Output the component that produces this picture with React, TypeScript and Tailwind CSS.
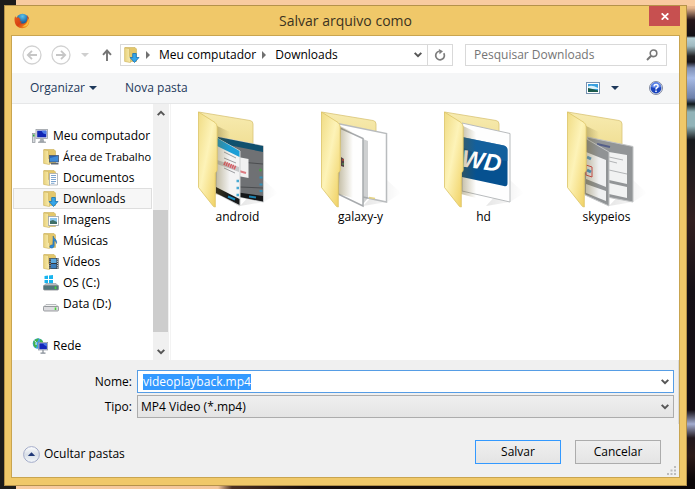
import { useEffect, useRef } from "react";
import type { ReactNode } from "react";

function FirefoxIcon() {
  return (
    <svg width="16" height="16" viewBox="0 0 16 16" aria-hidden="true">
      <defs>
        <radialGradient id="ff-globe" cx="0.5" cy="0.2" r="0.8">
          <stop offset="0" stopColor="#5fc4ea" />
          <stop offset="0.6" stopColor="#1c68a8" />
          <stop offset="1" stopColor="#123a78" />
        </radialGradient>
        <linearGradient id="ff-fox" x1="0" y1="0" x2="1" y2="1">
          <stop offset="0" stopColor="#e8641b" />
          <stop offset="0.5" stopColor="#d63f14" />
          <stop offset="1" stopColor="#f9b42a" />
        </linearGradient>
      </defs>
      <circle cx="8.500" cy="7" r="6.200" fill="url(#ff-globe)" />
      <path d="M1.200 3 C.6 4.500 .4 6 .6 8 C1 12.400 4.200 15.200 8.200 15.200 C12.400 15.200 15.400 12 15.300 8 C15.300 5.500 14.500 3.500 13 2.200 C14 5 13.200 8.800 11 10 C9 11 6.800 10.600 6.200 9.600 C7.200 9.700 8 9.400 8.400 8.800 C7.200 8.700 6.200 8.200 5.600 7.400 C6 6.800 6.600 6.500 6.700 5.900 C5.500 5.600 4.900 5 4.700 4.200 C3.900 4 3 4.300 2.400 4.800 C1.800 4.200 1.400 3.700 1.200 3Z" fill="url(#ff-fox)" />
      <path d="M13.800 5 C14.400 9 11.500 12.800 8 13.200 C11.500 14.800 15 12 14.900 8 C14.900 6.800 14.500 5.800 13.800 5Z" fill="#fbc03a" />
    </svg>
  );
}

function SmallFolder({ children }: { children?: ReactNode }) {
  return (
    <svg width="16" height="16" viewBox="0 0 16 16" className="shrink-0" aria-hidden="true">
      <defs>
        <linearGradient id="sf-front" x1="0" y1="0" x2="1" y2="0">
          <stop offset="0" stopColor="#e9d27d" />
          <stop offset="1" stopColor="#f8ecb0" />
        </linearGradient>
      </defs>
      <path d="M1 .5 H11 L12.500 2 V14.500 H5Z" fill="#e3c76b" stroke="#cbb05a" strokeWidth=".6" />
      <path d="M.6 .8 L5.500 1.600 V9.500 L6.500 10.200 V15.600 L.6 14.400Z" fill="url(#sf-front)" stroke="#cdb25c" strokeWidth=".6" />
      {children}
    </svg>
  );
}

const DownArrowMark = () => (
  <path d="M8.700 6.500 H12.300 V10.500 H15 L10.500 15.500 L6 10.500 H8.700Z" fill="#35a5e8" stroke="#1571b4" strokeWidth=".8" />
);
const DesktopMark = () => (
  <g>
    <rect x="6.500" y="6.500" width="9" height="6.500" fill="#2a5fae" stroke="#4a5a70" strokeWidth=".8" />
    <path d="M7 9 L15 7 V12.500 H7Z" fill="#3f8ad6" />
    <path d="M8 14 H15.500 V15.500 H8Z" fill="#5e6670" />
  </g>
);
const DocumentMark = () => (
  <g>
    <path d="M6.500 3.500 H14.500 V15 H6.500Z" fill="#fff" stroke="#a3a9b0" strokeWidth=".8" />
    <path d="M8 5.500 H13 M8 7.500 H13 M8 9.500 H13 M8 11.500 H13 M8 13.300 H11.500" stroke="#6f9ccb" strokeWidth=".9" />
  </g>
);
const ImageMark = () => (
  <g>
    <rect x="5.500" y="4.500" width="10" height="9" fill="#fff" stroke="#9ba3aa" strokeWidth=".8" />
    <rect x="7" y="6" width="7" height="6" fill="#8cc7ee" />
    <path d="M7 9 L10 8 L14 10 V12 H7Z" fill="#3f6f68" />
  </g>
);
const MusicMark = () => (
  <path d="M10.200 3 C10.500 6 14.500 6.200 13.500 10.500 C13.300 8.500 12 7.800 11.200 7.600 V13 C11 15.200 7 16 6.800 13.800 C6.700 12.300 8.600 11.700 9.800 12Z" fill="#2d8bd8" stroke="#1a5d9e" strokeWidth=".5" />
);
const VideoMark = () => (
  <g>
    <rect x="6" y="4" width="9.500" height="11" fill="#35393d" />
    <rect x="8" y="4.600" width="5.500" height="4.400" fill="#5eaae0" />
    <rect x="8" y="10" width="5.500" height="4.400" fill="#3d7dba" />
    <path d="M7 4.500 V15 M14.500 4.500 V15" stroke="#d9dde0" strokeWidth=".9" strokeDasharray="1.200 1" />
  </g>
);

function ComputerIcon() {
  return (
    <svg width="16" height="16" viewBox="0 0 16 16" className="shrink-0" aria-hidden="true">
      <rect x="0.500" y="5.500" width="2.500" height="9" fill="#d5d9dc" stroke="#8c9297" strokeWidth=".7" />
      <rect x="1" y="6.500" width="1.500" height="2" fill="#2fae39" />
      <rect x="4" y="1.500" width="11.500" height="9" fill="#e4e6e8" stroke="#999fa5" strokeWidth=".8" />
      <rect x="5.200" y="2.700" width="9.100" height="6.600" fill="#1226b4" />
      <path d="M9.500 2.700 H14.300 V6.200 Q11 6.200 9.500 2.700Z" fill="#4d7be8" />
      <path d="M8.300 11 H11.500 L12.500 14.200 H7.200Z" fill="#a7adb2" />
      <path d="M6 14.200 H14" stroke="#8c9297" />
    </svg>
  );
}

function DriveIcon({ system }: { system?: boolean }) {
  return (
    <svg width="16" height="16" viewBox="0 0 16 16" className="shrink-0" aria-hidden="true">
      {system && <path d="M1.500 1 L5 .6 V4 H1.500Z M6 .5 L10 0 V4 H6Z M1.500 5 H5 V8.400 L1.500 8Z M6 5 H10 V9 L6 8.500Z" fill="#18b4ee" />}
      <path d="M3 8.500 H13 L15.500 11 H.5Z" fill={system ? "#b8bec3" : "#f2f2f2"} stroke="#9fa4a8" strokeWidth=".7" />
      <rect x=".5" y="10.500" width="15" height="4.500" rx="1" fill={system ? "#53777c" : "#dcdcdf"} stroke="#85898d" strokeWidth=".8" />
      <path d="M12.500 11.500 V14" stroke="#46d33b" strokeWidth="1.600" />
    </svg>
  );
}

function NetworkIcon() {
  return (
    <svg width="16" height="16" viewBox="0 0 16 16" className="shrink-0" aria-hidden="true">
      <circle cx="6" cy="5.500" r="5.300" fill="#3b9fe0" />
      <path d="M1.500 3 Q4 0 7 .6 L5.500 3.500 L3 5 L5 7.500 L3.800 10 Q.5 8 1.500 3Z M8 1 Q11.500 2.500 11 5 L8 4.500Z" fill="#43b548" />
      <path d="M2.500 2.500 Q5 4 4 7" stroke="#d7f2fa" fill="none" strokeWidth="1" />
      <rect x="6.500" y="4.500" width="9.200" height="7.500" fill="#dfe3ea" stroke="#7f8893" strokeWidth=".6" />
      <rect x="7.300" y="5.300" width="7.600" height="5.900" fill="#1328bb" />
      <path d="M11 5.300 H14.900 V8.500 Q12 8 11 5.300Z" fill="#4c78e4" />
      <path d="M11 12 V15 M8.500 15.200 H13.500" stroke="#858d96" strokeWidth="1.200" />
    </svg>
  );
}

function BigFolder({ id, children }: { id: string; children: ReactNode }) {
  return (
    <svg width="96" height="100" viewBox="0 0 96 100" aria-hidden="true">
      <defs>
        <linearGradient id={`${id}-front`} x1="0" y1="0" x2="1" y2="1">
          <stop offset="0" stopColor="#f0dc85" />
          <stop offset="0.450" stopColor="#fdf3b8" />
          <stop offset="1" stopColor="#efce5c" />
        </linearGradient>
        <linearGradient id={`${id}-back`} x1="0" y1="0" x2="0" y2="1">
          <stop offset="0" stopColor="#f7ebb0" />
          <stop offset="1" stopColor="#e8cf72" />
        </linearGradient>
        <linearGradient id={`${id}-fall`} x1="0" y1="0" x2="1" y2="0">
          <stop offset="0" stopColor="#000" stopOpacity="0.250" />
          <stop offset="1" stopColor="#000" stopOpacity="0" />
        </linearGradient>
        <linearGradient id={`${id}-shade`} x1="0" y1="0" x2="1" y2="0">
          <stop offset="0" stopColor="#6b5a1c" stopOpacity="0.400" />
          <stop offset="1" stopColor="#6b5a1c" stopOpacity="0" />
        </linearGradient>
      </defs>
      <path d="M50 96 L74 70 L88 83 L74 92Z" fill={`url(#${id}-fall)`} opacity="0.400" />
      <path d="M8.500 2 L60 10.500 Q63 11 63 14 V70 L27 80Z" fill={`url(#${id}-back)`} stroke="#d9c476" strokeWidth=".8" />
      {children}
      <path d="M27 16 L40 22 V88 L25 84Z" fill={`url(#${id}-shade)`} />
      <path d="M8.500 2 L25 12.500 Q27 14 27.200 17 V60 Q27 61.500 25.300 63 V97 L23.500 96.500 L8.500 77.500Z" fill={`url(#${id}-front)`} stroke="#dcc467" strokeWidth=".8" />
    </svg>
  );
}

const AndroidPages = () => (
  <g>
    <path d="M28 27 L73.500 36 V92 L45 86Z" fill="#6f7174" stroke="#c7c9ca" strokeWidth="1" />
    <path d="M28 27 L73 36 V42 L28 33Z" fill="#10506e" />
    <path d="M50 52 L73 54 M50 77 L73 78" stroke="#4b4d50" />
    <path d="M48 47 L58.500 49 V68 L48 66Z" fill="#f1f1f1" />
    <path d="M49 61 L56 63" stroke="#dd7b82" strokeWidth="2" />
    <circle cx="70.500" cy="60" r="1.500" fill="#4a9a49" />
    <path d="M69.500 67.500 h3 M69.500 74.500 h3 M69.500 81 h3" stroke="#3190b8" strokeWidth="2" />
    <path d="M45 82 L73 86 V91.500 L45 86Z" fill="#151719" />
    <path d="M59 86.500 L66 87.500" stroke="#1c82b0" strokeWidth="2" />
    <path d="M27 28 L50 41 V96 L26 83Z" fill="#f4f4f4" stroke="#cfd1d2" strokeWidth="1" />
    <path d="M27 28 L49.500 41 V47 L27 36Z" fill="#1c9ed6" />
    <path d="M34 42 L46 48 M34 48 L46 53 M34 58 L45 63" stroke="#85878a" strokeWidth=".8" />
    <path d="M27 50 L49 57 V62 L27 54Z" fill="#c8c9ca" />
    <path d="M34 53 L46 58" stroke="#d95b63" strokeWidth="4" strokeDasharray="1.500 .7" />
    <path d="M46.500 71 h2.500 M46.500 78 h2.500 M46.500 85 h2.500" stroke="#48a9d2" strokeWidth="2.500" />
    <path d="M26 77 L49.500 89 V95 L26 83Z" fill="#17191b" />
    <path d="M38 86.500 L45 89.500" stroke="#168cc0" strokeWidth="2" />
  </g>
);

const GalaxyPages = () => (
  <g>
    <path d="M22 13 L73.500 23.500 V92 L50 87Z" fill="#fff" stroke="#b9bcbe" strokeWidth="1.500" />
    <path d="M50 29 L55 31 V88 L50 94Z" fill="#92969a" opacity="0.450" />
    <path d="M27 18 L50 28.500 V96 L25 84Z" fill="#fefefe" stroke="#a7aaad" strokeWidth="1.500" />
    <path d="M28 47 L31 49 V57 L28 56Z" fill="#4b3653" />
    <path d="M29 50 h2" stroke="#c94646" strokeWidth="1.500" />
    <path d="M29 54 h2" stroke="#459966" strokeWidth="1.500" />
    <path d="M56 87.500 L62 88.500" stroke="#e5d383" strokeWidth="1.500" />
  </g>
);

const DrivePages = () => (
  <g>
    <path d="M26 13 L74 23.500 V92 L26 81Z" fill="#fefefe" stroke="#b8bbbd" strokeWidth="1" />
    <path d="M26 27 L68 35.500 Q71.500 36.500 71.500 40 V73 Q71.500 77 68 76 L26 67Z" fill="#065190" />
    <path d="M26 27 L68 35.500 Q71.500 36.500 71.500 40 V51 Q50 50 26 37Z" fill="#1c6ba7" opacity=".6" />
    <text x="25" y="59" fill="#fff" transform="rotate(8 44 54)" className="font-['Liberation_Sans',sans-serif] text-[24px] font-bold italic">WD</text>
  </g>
);

const SkypePages = () => (
  <g>
    <path d="M28 27 L74 36.500 V92 L48 87Z" fill="#929597" stroke="#c2c4c5" strokeWidth="1" />
    <path d="M38 34 L51 37" stroke="#555f88" strokeWidth="2" />
    <path d="M50 42 L68 45 V74 L50 70Z M50 73 L68 77 V88 L50 84Z" fill="#f1f2f2" />
    <path d="M50 47 L64 50 M50 51 L58 53 M50 60 L68 64" stroke="#b2b4b6" />
    <path d="M26 28 L50 42 V96 L26 85Z" fill="#909395" stroke="#c5c7c8" strokeWidth="1" />
    <path d="M27 42 L47 50 V77 L27 69Z M27 74 L47 81 V91 L27 83Z" fill="#eff0f1" />
    <path d="M28 47 L32 49" stroke="#5c9ccc" strokeWidth="3" />
    <path d="M27 55 L33 57 V67 L27 65Z" fill="#eef3f8" stroke="#d4454a" strokeWidth="1" />
    <path d="M28 60 L32 62" stroke="#4796cf" strokeWidth="3" />
  </g>
);

function Chevron({ up }: { up?: boolean }) {
  return (
    <svg width="8" height="6" viewBox="0 0 8 6" aria-hidden="true" className={up ? "rotate-180" : ""}>
      <path d="M.7 .9 L4 4.200 L7.300 .9" fill="none" stroke="#555" strokeWidth="2" />
    </svg>
  );
}

function Triangle() {
  return (
    <svg width="8" height="4" viewBox="0 0 8 4" aria-hidden="true">
      <path d="M0 0 H8 L4 4Z" fill="currentColor" />
    </svg>
  );
}

function Crumb() {
  return (
    <svg width="4" height="8" viewBox="0 0 4 8" aria-hidden="true">
      <path d="M0 0 L4 4 L0 8Z" fill="#707070" />
    </svg>
  );
}

function RoundArrow({ back }: { back?: boolean }) {
  return (
    <svg width="20" height="20" viewBox="0 0 20 20" aria-hidden="true" className={back ? "" : "rotate-180"}>
      <circle cx="10" cy="10" r="9" fill="#fff" stroke="#d2d2d2" strokeWidth="1.300" />
      <path d="M15 10 H6 M10 5.800 L5.800 10 L10 14.200" fill="none" stroke="#c6c6c6" strokeWidth="1.800" />
    </svg>
  );
}

const places = [
  { name: "Área de Trabalho", icon: <SmallFolder><DesktopMark /></SmallFolder>, long: true },
  { name: "Documentos", icon: <SmallFolder><DocumentMark /></SmallFolder> },
  { name: "Downloads", icon: <SmallFolder><DownArrowMark /></SmallFolder>, active: true },
  { name: "Imagens", icon: <SmallFolder><ImageMark /></SmallFolder> },
  { name: "Músicas", icon: <SmallFolder><MusicMark /></SmallFolder> },
  { name: "Vídeos", icon: <SmallFolder><VideoMark /></SmallFolder> },
  { name: "OS (C:)", icon: <DriveIcon system /> },
  { name: "Data (D:)", icon: <DriveIcon /> },
];

const folders = [
  { name: "android", pages: <AndroidPages /> },
  { name: "galaxy-y", pages: <GalaxyPages /> },
  { name: "hd", pages: <DrivePages /> },
  { name: "skypeios", pages: <SkypePages /> },
];

function TitleBar() {
  return (
    <header className="grid h-[29px] grid-cols-[1fr_auto_1fr] items-center">
      <div className="pl-[9px]"><FirefoxIcon /></div>
      <h1 className="text-[14px] leading-5 text-[#3b3321]">Salvar arquivo como</h1>
      <button aria-label="Fechar" className="mr-[6px] flex h-5 w-[31px] items-center justify-center self-start justify-self-end bg-[#c75050]">
        <svg width="8" height="7" viewBox="0 0 8 7" aria-hidden="true">
          <path d="M.7 .3 L7.300 6.700 M7.300 .3 L.7 6.700" stroke="#fff" strokeWidth="1.700" />
        </svg>
      </button>
    </header>
  );
}

function NavigationBar() {
  return (
    <div className="flex h-[37px] items-center bg-white pr-3 pl-[10px]">
      <button aria-label="Voltar" className="mr-[9px]"><RoundArrow back /></button>
      <button aria-label="Avançar" className="mr-[10px]"><RoundArrow /></button>
      <button aria-label="Locais recentes" className="mr-[13px] text-[#cfcfcf]"><Triangle /></button>
      <button aria-label="Acima" className="mr-[8px]">
        <svg width="10" height="12" viewBox="0 0 10 12" aria-hidden="true">
          <path d="M5 12 V1.500 M1 5.800 L5 1.500 L9 5.800" fill="none" stroke="#757575" strokeWidth="1.900" />
        </svg>
      </button>
      <nav aria-label="Caminho" className="flex h-[22px] flex-1 items-center border border-[#d9d9d9]">
        <span className="ml-[3px]"><SmallFolder><DownArrowMark /></SmallFolder></span>
        <span className="ml-[6px]"><Crumb /></span>
        <button className="ml-[9px]">Meu computador</button>
        <span className="ml-[6px]"><Crumb /></span>
        <button className="ml-[9px]">Downloads</button>
        <button aria-label="Locais anteriores" className="mr-[5px] ml-auto"><Chevron /></button>
        <button aria-label="Atualizar" className="flex h-full w-[25px] items-center justify-center border-l border-[#d9d9d9]">
          <svg width="12" height="12" viewBox="0 0 12 12" aria-hidden="true">
            <path d="M9.700 4.200 A4.300 4.300 0 1 1 5 2.300" fill="none" stroke="#7d7d7d" strokeWidth="1.700" />
            <path d="M4.800 0 L9 2.300 L5.600 5.300Z" fill="#7d7d7d" />
          </svg>
        </button>
      </nav>
      <label className="ml-3 flex h-[22px] w-[202px] items-center border border-[#d9d9d9] pr-2 pl-2">
        <input type="search" aria-label="Pesquisar Downloads" placeholder="Pesquisar Downloads" className="min-w-0 flex-1 outline-none placeholder:text-[#757575]" />
        <svg width="12" height="12" viewBox="0 0 12 12" aria-hidden="true">
          <circle cx="7.500" cy="4.300" r="3.300" fill="none" stroke="#777" strokeWidth="1.600" />
          <path d="M5.200 6.800 L1 11" stroke="#777" strokeWidth="2" />
        </svg>
      </label>
    </div>
  );
}

function Toolbar() {
  return (
    <div className="flex h-[31px] items-center border-b border-[#e6e7e8] bg-[#f5f6f7] pr-4 pl-[18px] text-[#1e395b]">
      <button className="flex items-center gap-1">Organizar <Triangle /></button>
      <button className="ml-7">Nova pasta</button>
      <button aria-label="Alterar o modo de exibição" className="ml-auto flex items-center gap-[11px]">
        <svg width="14" height="12" viewBox="0 0 14 12" aria-hidden="true">
          <rect x=".5" y=".5" width="13" height="11" fill="#fff" stroke="#7892b1" />
          <rect x="2" y="2" width="10" height="8" fill="#3aa0df" />
          <path d="M2 4.500 Q6 2.500 12 6 V7 H2Z" fill="#dcf2fb" />
          <path d="M2 6 Q6 6.500 12 8.500 V10 H2Z" fill="#1c5b4b" />
        </svg>
        <Triangle />
      </button>
      <button aria-label="Ajuda" className="ml-[30px]">
        <svg width="14" height="14" viewBox="0 0 14 14" aria-hidden="true">
          <circle cx="7" cy="7" r="6.500" fill="#dfe3ec" stroke="#8089a0" />
          <circle cx="7" cy="7" r="5.400" fill="#1b44bd" />
          <path d="M2 6 A5 5 0 0 1 12 6 Q7 8 2 6Z" fill="#5c83e6" />
          <path d="M4.900 5.300 Q5.200 3.400 7.200 3.500 Q9.200 3.700 9 5.400 Q8.800 6.500 7.700 7 Q7 7.400 7 8.400 M7 9.500 V11" fill="none" stroke="#fff" strokeWidth="1.500" />
        </svg>
      </button>
    </div>
  );
}

function Sidebar() {
  return (
    <aside className="flex w-[159px] shrink-0 border-r border-[#f3f3f3]">
      <nav aria-label="Locais" className="min-w-0 flex-1 overflow-hidden pt-[21px] pl-px">
        <a href="#computador" className="flex h-[21px] items-center gap-[5px] pl-[19px] whitespace-nowrap"><ComputerIcon />Meu computador</a>
        <ul>
          {places.map((place) => (
            <li key={place.name}>
              <a
                href="#local"
                className={
                  place.active
                    ? "mr-px flex h-[21px] items-center gap-1 border border-[#dedede] bg-[#f7f7f7] pl-[29px] whitespace-nowrap"
                    : "mr-px flex h-[21px] items-center gap-1 border border-transparent pl-[29px] whitespace-nowrap"
                }
              >
                {place.icon}
                <span className={place.long ? "text-[11px]" : ""}>{place.name}</span>
              </a>
            </li>
          ))}
        </ul>
        <a href="#rede" className="mt-[21px] flex h-[21px] items-center gap-[5px] pl-[19px]"><NetworkIcon />Rede</a>
      </nav>
      <div className="mr-px flex w-4 flex-col items-center bg-[#f0f0f0]">
        <button aria-label="Rolar para cima" className="flex h-[17px] items-center justify-center"><Chevron up /></button>
        <div className="w-full flex-[89]" />
        <div className="mr-px w-[15px] flex-[122] bg-[#cdcdcd]" />
        <div className="w-full flex-[11]" />
        <button aria-label="Rolar para baixo" className="flex h-[17px] items-center justify-center"><Chevron /></button>
      </div>
    </aside>
  );
}

function Files() {
  return (
    <ul className="flex flex-1 flex-wrap content-start pt-[6px] pl-[5px]">
      {folders.map((folder) => (
        <li key={folder.name} className="w-[123px]">
          <button className="flex w-full flex-col items-center">
            <BigFolder id={folder.name}>{folder.pages}</BigFolder>
            <span className="-mt-px">{folder.name}</span>
          </button>
        </li>
      ))}
    </ul>
  );
}

function Fields() {
  const nameRef = useRef<HTMLInputElement>(null);
  useEffect(() => {
    nameRef.current?.focus();
    nameRef.current?.select();
  }, []);
  return (
    <div className="grid grid-cols-[120px_1fr] items-center gap-x-[5px] gap-y-[2px] border-r border-[#dadada] pt-[10px] pr-1 pb-[6px]">
      <label htmlFor="nome" className="text-right">Nome:</label>
      <div className="flex h-[23px] items-center border border-[#569de5] bg-white pr-1 pl-[5px]">
        <input ref={nameRef} id="nome" defaultValue="videoplayback.mp4" className="h-4 min-w-0 flex-1 leading-4 outline-none selection:bg-[#3399ff] selection:text-white" />
        <button aria-label="Nomes recentes"><Chevron /></button>
      </div>
      <label htmlFor="tipo" className="text-right">Tipo:</label>
      <div className="grid h-[23px] items-center border border-[#acacac] bg-linear-to-b from-[#efefef] to-[#e4e4e4]">
        <select id="tipo" className="col-start-1 row-start-1 h-full w-full appearance-none bg-transparent pl-[3px] outline-none">
          <option>MP4 Video (*.mp4)</option>
        </select>
        <span className="pointer-events-none col-start-1 row-start-1 mr-1 flex justify-self-end"><Chevron /></span>
      </div>
    </div>
  );
}

function Footer() {
  return (
    <footer className="flex items-center pt-[16px] pr-[18px] pl-[11px]">
      <button className="mt-1 flex items-center gap-1">
        <svg width="17" height="17" viewBox="0 0 17 17" aria-hidden="true">
          <defs>
            <linearGradient id="hide-face" x1="0" y1="0" x2="0" y2="1">
              <stop offset="0" stopColor="#fff" />
              <stop offset=".5" stopColor="#d9dfe7" />
              <stop offset="1" stopColor="#f4f8fb" />
            </linearGradient>
          </defs>
          <circle cx="8.500" cy="8.500" r="7.900" fill="url(#hide-face)" stroke="#a3abc9" />
          <path d="M4.800 10 L8.500 6.300 L12.200 10Z" fill="#1f3878" />
        </svg>
        Ocultar pastas
      </button>
      <button className="ml-auto h-6 w-[86px] border border-[#3399ff] bg-linear-to-b from-[#efefef] to-[#e4e4e4]">Salvar</button>
      <button className="ml-[14px] h-6 w-[86px] border border-[#acacac] bg-linear-to-b from-[#efefef] to-[#e4e4e4]">Cancelar</button>
    </footer>
  );
}

export default function App() {
  return (
    <div className="flex min-h-screen bg-[linear-gradient(90deg,#1d1c1b_16px,transparent_16px),linear-gradient(180deg,#f8cba0_0px,#e4b48e_8px,#261519_20px,#121015_36px,#b5cfd5_38px,#9fb9c0_46px,#242427_56px,#16141b_62px,#7e8eb4_68px,#a8bbe5_78px,#6c7fa9_98px,#10191c_104px,#91b3b8_112px,#91b3b8_126px,#17191d_140px,#321f20_220px,#151016_290px,#130c13_410px,#a4add0_424px,#22171c_438px,#2c1a18_456px,#0b0608_480px)] font-['Open_Sans',sans-serif] text-[12px] leading-4 text-black">
      <div className="flex min-h-full flex-1 flex-col bg-[linear-gradient(90deg,transparent_16px,#f8cba0_16px,#f4c69c_218px,#4c3023_232px,#170d0c_310px,transparent_680px)] bg-[length:100%_4px] bg-bottom bg-no-repeat">
        <div className="flex flex-1 flex-col bg-[linear-gradient(90deg,transparent_16px,#f8cba0_16px)] bg-[length:100%_6px] bg-top bg-no-repeat pt-[5px] pr-2 pb-[3px] pl-1">
          <main className="flex flex-1 flex-col border border-[#b5924a] bg-[#f0c869]">
            <TitleBar />
            <div className="mx-[6px] mb-[7px] flex flex-1 flex-col border border-[#c9a550] bg-[#f0f0f0]">
              <NavigationBar />
              <Toolbar />
              <div className="flex min-h-[256px] bg-white">
                <Sidebar />
                <Files />
              </div>
              <Fields />
              <Footer />
              <svg width="9" height="9" viewBox="0 0 9 9" aria-hidden="true" className="mt-auto mr-[3px] mb-[2px] self-end">
                <path d="M7 0h2v2h-2z M3.500 3.500h2v2h-2z M7 3.500h2v2h-2z M0 7h2v2h-2z M3.500 7h2v2h-2z M7 7h2v2h-2z" fill="#bcbcbc" />
              </svg>
            </div>
          </main>
        </div>
      </div>
    </div>
  );
}
